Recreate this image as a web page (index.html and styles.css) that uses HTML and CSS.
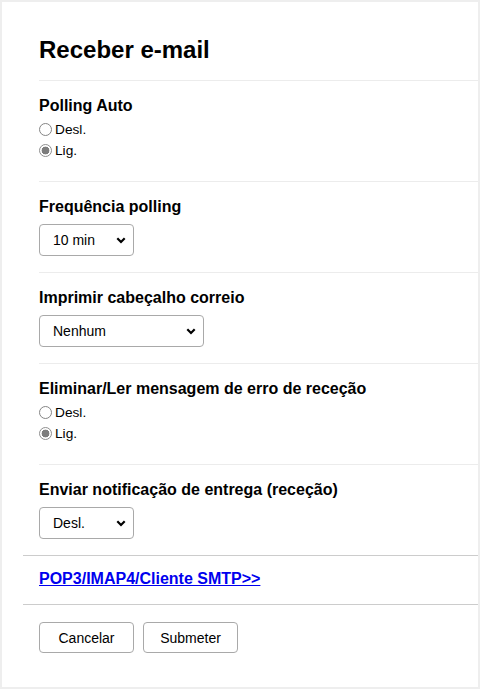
FILE: index.html
```html
<!DOCTYPE html>
<html lang="pt">
<head>
  <meta charset="UTF-8">
  <title>Receber e-mail</title>
  <link rel="stylesheet" href="styles.css">
</head>
<body>

<div class="panel">
  <h1 class="title">Receber e-mail</h1>

  <form id="mailForm">
    <div class="section radios">
      <div class="heading">Polling Auto</div>
      <label class="radio-row"><input type="radio" name="auto" value="off"> Desl.</label>
      <label class="radio-row"><input type="radio" name="auto" value="on" checked> Lig.</label>
    </div>

    <div class="section">
      <div class="heading">Frequência polling</div>
      <select class="sel sel-small" name="freq">
        <option>10 min</option>
        <option>5 min</option>
        <option>30 min</option>
      </select>
    </div>

    <div class="section">
      <div class="heading">Imprimir cabeçalho correio</div>
      <select class="sel sel-wide" name="header">
        <option>Nenhum</option>
        <option>Todos</option>
      </select>
    </div>

    <div class="section radios">
      <div class="heading">Eliminar/Ler mensagem de erro de receção</div>
      <label class="radio-row"><input type="radio" name="err" value="off"> Desl.</label>
      <label class="radio-row"><input type="radio" name="err" value="on" checked> Lig.</label>
    </div>

    <div class="section">
      <div class="heading">Enviar notificação de entrega (receção)</div>
      <select class="sel sel-small" name="notify">
        <option>Desl.</option>
        <option>Lig.</option>
      </select>
    </div>

    <div class="link-row">
      <a href="#">POP3/IMAP4/Cliente SMTP&gt;&gt;</a>
    </div>

    <div class="actions">
      <button type="button" class="btn">Cancelar</button>
      <button type="submit" class="btn">Submeter</button>
    </div>
  </form>
</div>

</body>
</html>
```

FILE: styles.css
```css
body {
  margin: 0;
  padding: 2px;
  background-color: #eeeeee;
  font-family: "Liberation Sans", Arial, sans-serif;
  color: #000;
}
.panel {
  background-color: #fff;
  min-height: 685px;
  box-sizing: border-box;
  padding: 34px 0 0 21px;
}
.title {
  margin: 0;
  padding: 0 0 16px 16px;
  font-size: 24px;
  line-height: 28px;
  font-weight: bold;
}
.section {
  margin-left: 16px;
  border-top: 1px solid #ececec;
  padding: 16px 0 16px 0;
}
.section.radios {
  padding-bottom: 20px;
}
.heading {
  font-size: 16px;
  line-height: 18px;
  font-weight: bold;
  margin-bottom: 8px;
}
.radios .heading {
  margin-bottom: 4px;
}
.radio-row {
  display: flex;
  align-items: center;
  height: 21px;
  font-size: 13.7px;
}
.radio-row input {
  appearance: none;
  width: 13px;
  height: 13px;
  margin: 0 3px 0 0;
  border: 1px solid #858585;
  border-radius: 50%;
  background: #fff;
  box-sizing: border-box;
}
.radio-row input:checked {
  border-color: #8f8f8f;
  background: radial-gradient(circle, #7d7d7d 0 3.6px, #fff 4.2px);
}
.sel {
  appearance: none;
  height: 32px;
  border: 1px solid #a9a9a9;
  border-radius: 4px;
  padding: 0 0 0 13px;
  font-family: inherit;
  font-size: 14px;
  color: #000;
  background: #fff url("data:image/svg+xml;utf8,<svg xmlns='http://www.w3.org/2000/svg' width='10' height='7' viewBox='0 0 10 7'><path d='M1.3 1.3 L5 5 L8.7 1.3' fill='none' stroke='black' stroke-width='2.2'/></svg>") no-repeat right 7px center;
}
.sel-small {
  width: 95px;
}
.sel-wide {
  width: 165px;
}
.link-row {
  border-top: 1px solid #cccccc;
  padding: 14px 0 16px 16px;
  font-size: 16px;
  line-height: 18px;
  font-weight: bold;
}
.link-row a {
  color: #0000ee;
  text-decoration: underline;
}
.actions {
  border-top: 1px solid #cccccc;
  padding: 17px 0 0 16px;
  display: flex;
  gap: 9px;
}
.btn {
  width: 95px;
  height: 31px;
  background-color: #fff;
  border: 1px solid #a9a9a9;
  border-radius: 4px;
  font-family: inherit;
  font-size: 14px;
  color: #000;
  cursor: pointer;
}
```
